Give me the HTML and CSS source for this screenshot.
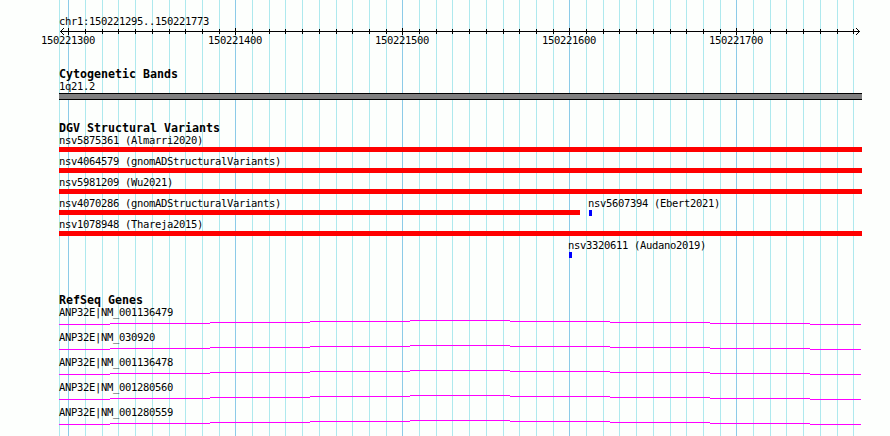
FILE: index.html
```html
<!DOCTYPE html>
<html>
<head>
<meta charset="utf-8">
<title>chr1:150221295..150221773</title>
<link rel="stylesheet" href="styles.css">
</head>
<body>
<div class="browser">
  <svg class="grid" width="890" height="436" viewBox="0 0 890 436">
    <path class="grid-minor" d="M59.5 0V436M85.5 0V436M102.5 0V436M118.5 0V436M135.5 0V436M152.5 0V436M169.5 0V436M185.5 0V436M202.5 0V436M219.5 0V436M252.5 0V436M269.5 0V436M285.5 0V436M302.5 0V436M319.5 0V436M336.5 0V436M352.5 0V436M369.5 0V436M386.5 0V436M419.5 0V436M436.5 0V436M452.5 0V436M469.5 0V436M486.5 0V436M503.5 0V436M519.5 0V436M536.5 0V436M553.5 0V436M586.5 0V436M603.5 0V436M619.5 0V436M636.5 0V436M653.5 0V436M670.5 0V436M686.5 0V436M703.5 0V436M720.5 0V436M753.5 0V436M770.5 0V436M786.5 0V436M803.5 0V436M820.5 0V436M837.5 0V436M853.5 0V436"/>
    <path class="grid-major" d="M68.5 0V436M235.5 0V436M402.5 0V436M569.5 0V436M736.5 0V436"/>
  </svg>

  <svg class="ruler" width="890" height="50" viewBox="0 0 890 50">
    <text class="rtext" x="59" y="25">chr1:150221295..150221773</text>
    <rect x="60" y="31" width="800" height="1" class="ink"/>
    <path class="tick" d="M63.5 28V29M62.5 29V30M61.5 30V31M61.5 32V33M62.5 33V34M63.5 34V35"/>
    <path class="tick" d="M856.5 28V29M857.5 29V30M858.5 30V31M858.5 32V33M857.5 33V34M856.5 34V35"/>
    <path class="tick" d="M85.5 29V34M102.5 29V34M118.5 29V34M135.5 29V34M152.5 29V34M169.5 29V34M185.5 29V34M202.5 29V34M219.5 29V34M252.5 29V34M269.5 29V34M285.5 29V34M302.5 29V34M319.5 29V34M336.5 29V34M352.5 29V34M369.5 29V34M386.5 29V34M419.5 29V34M436.5 29V34M452.5 29V34M469.5 29V34M486.5 29V34M503.5 29V34M519.5 29V34M536.5 29V34M553.5 29V34M586.5 29V34M603.5 29V34M619.5 29V34M636.5 29V34M653.5 29V34M670.5 29V34M686.5 29V34M703.5 29V34M720.5 29V34M753.5 29V34M770.5 29V34M786.5 29V34M803.5 29V34M820.5 29V34M837.5 29V34M853.5 29V34"/>
    <path class="tick" d="M68.5 28V35M235.5 28V35M402.5 28V35M569.5 28V35M736.5 28V35"/>
    <text class="rtext" x="68" y="44" text-anchor="middle">150221300</text>
    <text class="rtext" x="235" y="44" text-anchor="middle">150221400</text>
    <text class="rtext" x="402" y="44" text-anchor="middle">150221500</text>
    <text class="rtext" x="569" y="44" text-anchor="middle">150221600</text>
    <text class="rtext" x="736" y="44" text-anchor="middle">150221700</text>
  </svg>

  <div class="tracks">
    <section class="track cyto">
      <div class="track-title">Cytogenetic Bands</div>
      <div class="label">1q21.2</div>
      <div class="cyto-bar"></div>
    </section>

    <section class="track dgv">
      <div class="track-title">DGV Structural Variants</div>
      <div class="sv-row">
        <span class="feat-label" style="left:0px">nsv5875361 (Almarri2020)</span>
        <span class="feat red" style="left:0px;width:803px"></span>
      </div>
      <div class="sv-row">
        <span class="feat-label" style="left:0px">nsv4064579 (gnomADStructuralVariants)</span>
        <span class="feat red" style="left:0px;width:803px"></span>
      </div>
      <div class="sv-row">
        <span class="feat-label" style="left:0px">nsv5981209 (Wu2021)</span>
        <span class="feat red" style="left:0px;width:803px"></span>
      </div>
      <div class="sv-row">
        <span class="feat-label" style="left:0px">nsv4070286 (gnomADStructuralVariants)</span>
        <span class="feat red" style="left:0px;width:521px"></span>
        <span class="feat-label" style="left:529px">nsv5607394 (Ebert2021)</span>
        <span class="feat blue" style="left:530px;width:3px"></span>
      </div>
      <div class="sv-row">
        <span class="feat-label" style="left:0px">nsv1078948 (Thareja2015)</span>
        <span class="feat red" style="left:0px;width:803px"></span>
      </div>
      <div class="sv-row">
        <span class="feat-label" style="left:509px">nsv3320611 (Audano2019)</span>
        <span class="feat blue" style="left:510px;width:3px"></span>
      </div>
    </section>

    <section class="track refseq">
      <div class="track-title">RefSeq Genes</div>
      <div class="gene">
        <div class="label">ANP32E|NM_001136479</div>
        <svg class="intron" width="803" height="6" viewBox="0 0 803 6"><path d="M0 5.5H51M51 4.5H151M151 3.5H251M251 2.5H351M351 1.5H451M451 2.5H551M551 3.5H651M651 4.5H751M751 5.5H802"/></svg>
      </div>
      <div class="gene">
        <div class="label">ANP32E|NM_030920</div>
        <svg class="intron" width="803" height="6" viewBox="0 0 803 6"><path d="M0 5.5H51M51 4.5H151M151 3.5H251M251 2.5H351M351 1.5H451M451 2.5H551M551 3.5H651M651 4.5H751M751 5.5H802"/></svg>
      </div>
      <div class="gene">
        <div class="label">ANP32E|NM_001136478</div>
        <svg class="intron" width="803" height="6" viewBox="0 0 803 6"><path d="M0 5.5H51M51 4.5H151M151 3.5H251M251 2.5H351M351 1.5H451M451 2.5H551M551 3.5H651M651 4.5H751M751 5.5H802"/></svg>
      </div>
      <div class="gene">
        <div class="label">ANP32E|NM_001280560</div>
        <svg class="intron" width="803" height="6" viewBox="0 0 803 6"><path d="M0 5.5H51M51 4.5H151M151 3.5H251M251 2.5H351M351 1.5H451M451 2.5H551M551 3.5H651M651 4.5H751M751 5.5H802"/></svg>
      </div>
      <div class="gene">
        <div class="label">ANP32E|NM_001280559</div>
        <svg class="intron" width="803" height="6" viewBox="0 0 803 6"><path d="M0 5.5H51M51 4.5H151M151 3.5H251M251 2.5H351M351 1.5H451M451 2.5H551M551 3.5H651M651 4.5H751M751 5.5H802"/></svg>
      </div>
    </section>
  </div>
</div>
</body>
</html>
```

FILE: styles.css
```css
html, body {
  margin: 0;
  padding: 0;
  background: #fdfffd;
}

.browser {
  position: relative;
  width: 890px;
  height: 436px;
  overflow: hidden;
  font-family: "DejaVu Sans Mono", "Liberation Mono", monospace;
  font-size: 10.5px;
  letter-spacing: -0.32px;
  color: #000;
}

.grid {
  position: absolute;
  left: 0;
  top: 0;
  shape-rendering: crispEdges;
}

.grid-minor {
  stroke: #aee9ee;
  stroke-width: 1;
  fill: none;
}

.grid-major {
  stroke: #8ccbe8;
  stroke-width: 1;
  fill: none;
}

.ruler {
  position: relative;
  display: block;
  shape-rendering: crispEdges;
}

.rtext {
  font-family: "DejaVu Sans Mono", "Liberation Mono", monospace;
  font-size: 10.5px;
  letter-spacing: -0.32px;
  fill: #000;
}

.ink {
  fill: #000;
}

.tick {
  stroke: #000;
  stroke-width: 1;
  fill: none;
}

.tracks {
  position: relative;
  margin-left: 59px;
  width: 803px;
}

.track-title {
  font-weight: bold;
  font-size: 11.63px;
  letter-spacing: 0;
  line-height: 12px;
  height: 12px;
  white-space: pre;
}

.label {
  line-height: 13px;
  height: 13px;
  white-space: pre;
}

.cyto {
  margin-top: 18px;
}

.cyto-bar {
  height: 5px;
  border-top: 1px solid #000;
  border-bottom: 1px solid #000;
  background: #808080;
}

.dgv {
  margin-top: 22px;
}

.sv-row {
  position: relative;
  height: 21px;
}

.feat-label {
  position: absolute;
  top: 0;
  line-height: 13px;
  white-space: pre;
}

.feat {
  position: absolute;
  top: 13px;
  height: 5px;
}

.feat.red {
  background: #ff0000;
}

.feat.blue {
  background: #0000ff;
  height: 6px;
}

.refseq {
  margin-top: 35px;
}

.refseq .track-title {
  line-height: 11px;
  height: 11px;
}

.gene {
  height: 25px;
}

.intron {
  display: block;
  shape-rendering: crispEdges;
}

.intron path {
  stroke: #ff00ff;
  stroke-width: 1;
  fill: none;
}
```
